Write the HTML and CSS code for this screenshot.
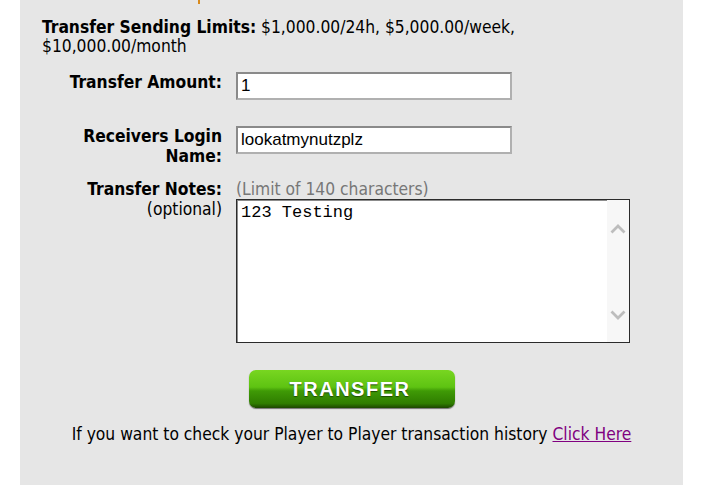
FILE: index.html
```html
<!DOCTYPE html>
<html lang="en">
<head>
    <meta charset="UTF-8">
    <title>Player to Player Transfer</title>
    <link rel="stylesheet" href="styles.css">
</head>
<body>
    <div class="panel">
        <span class="top-mark"></span>
        <p class="limits"><b>Transfer Sending Limits:</b> $1,000.00/24h, $5,000.00/week, $10,000.00/month</p>
        <form class="transfer-form">
            <label class="label row-one" for="amount">Transfer Amount:</label>
            <div class="field row-one">
                <input type="text" id="amount" class="text-input" value="1">
            </div>

            <label class="label row-two" for="receiver">Receivers Login Name:</label>
            <div class="field row-two">
                <input type="text" id="receiver" class="text-input" value="lookatmynutzplz">
            </div>

            <label class="label" for="notes">Transfer Notes:<br><span class="optional">(optional)</span></label>
            <div class="field">
                <div class="hint">(Limit of 140 characters)</div>
                <div class="notes-box">
                    <textarea id="notes" class="notes">123 Testing</textarea>
                    <div class="scrollbar">
                        <svg width="16" height="10" viewBox="0 0 16 10"><path d="M1.5 8.5 L8 2 L14.5 8.5" fill="none" stroke="#bdbdbd" stroke-width="2.8"/></svg>
                        <svg width="16" height="10" viewBox="0 0 16 10"><path d="M1.5 1.5 L8 8 L14.5 1.5" fill="none" stroke="#bdbdbd" stroke-width="2.8"/></svg>
                    </div>
                </div>
            </div>

            <div class="actions">
                <button type="submit" class="transfer-btn">TRANSFER</button>
            </div>
        </form>
        <p class="history">If you want to check your Player to Player transaction history <a href="#">Click Here</a></p>
    </div>
</body>
</html>
```

FILE: styles.css
```css
body {
    margin: 0;
    background-color: #fff;
    font-family: "DejaVu Sans Condensed", "DejaVu Sans", sans-serif;
    font-size: 17.3px;
    color: #000;
}
.panel {
    position: relative;
    margin-left: 20px;
    width: 663px;
    height: 485px;
    box-sizing: border-box;
    padding: 18px 22px 0 22px;
    background-color: #e6e6e6;
}
.top-mark {
    position: absolute;
    left: 178px;
    top: 0;
    width: 2px;
    height: 4px;
    background-color: #d98a1c;
}
.limits {
    margin: 0;
    line-height: 19px;
    width: 540px;
}
.transfer-form {
    display: grid;
    grid-template-columns: 180px 1fr;
    column-gap: 14px;
    margin-top: 16px;
}
.label {
    text-align: right;
    font-weight: bold;
    line-height: 20px;
}
.row-one {
    margin-bottom: 26px;
}
.row-two {
    margin-bottom: 13px;
}
.optional {
    font-weight: normal;
}
.text-input {
    width: 276px;
    height: 28px;
    box-sizing: border-box;
    border: 2px solid #8a8a8a;
    border-right-color: #b0b0b0;
    border-bottom-color: #b0b0b0;
    padding: 0 3px;
    font-family: "Liberation Sans", Arial, sans-serif;
    font-size: 17px;
    color: #000;
    background: #fff;
}
.hint {
    color: #777;
    line-height: 20px;
}
.notes-box {
    display: flex;
    width: 394px;
    height: 144px;
    box-sizing: border-box;
    border: 1px solid #2b2b2b;
    box-shadow: inset 1px 1px 0 #8c8c8c;
    background: #fff;
}
.notes {
    flex: 1;
    border: none;
    resize: none;
    outline: none;
    padding: 2px 3px;
    margin: 1px 0 0 1px;
    font-family: "Liberation Mono", "Courier New", monospace;
    font-size: 17px;
    line-height: 19px;
    color: #000;
    overflow: hidden;
}
.scrollbar {
    width: 22px;
    background-color: #f7f7f7;
    display: flex;
    flex-direction: column;
    justify-content: space-between;
    align-items: center;
    padding: 24px 0 22px;
}
.actions {
    grid-column: 2;
    margin-top: 27px;
}
.transfer-btn {
    display: block;
    margin-left: 13px;
    width: 206px;
    height: 38px;
    border: none;
    border-radius: 7px;
    background: linear-gradient(#78d621 0%, #5ec312 45%, #3f9a06 55%, #2f7d00 88%, #1c4600 100%);
    box-shadow: 0 1px 1px rgba(0, 0, 0, 0.5);
    color: #fff;
    font-family: "Liberation Sans", Arial, sans-serif;
    font-weight: bold;
    font-size: 20px;
    letter-spacing: 1.5px;
    text-shadow: 0 1px 1px #1d4a00;
    cursor: pointer;
    padding: 0 4px 0 0;
}
.history {
    margin: 16px -22px 0;
    text-align: center;
    line-height: 20px;
}
.history a {
    color: #800080;
}
```
